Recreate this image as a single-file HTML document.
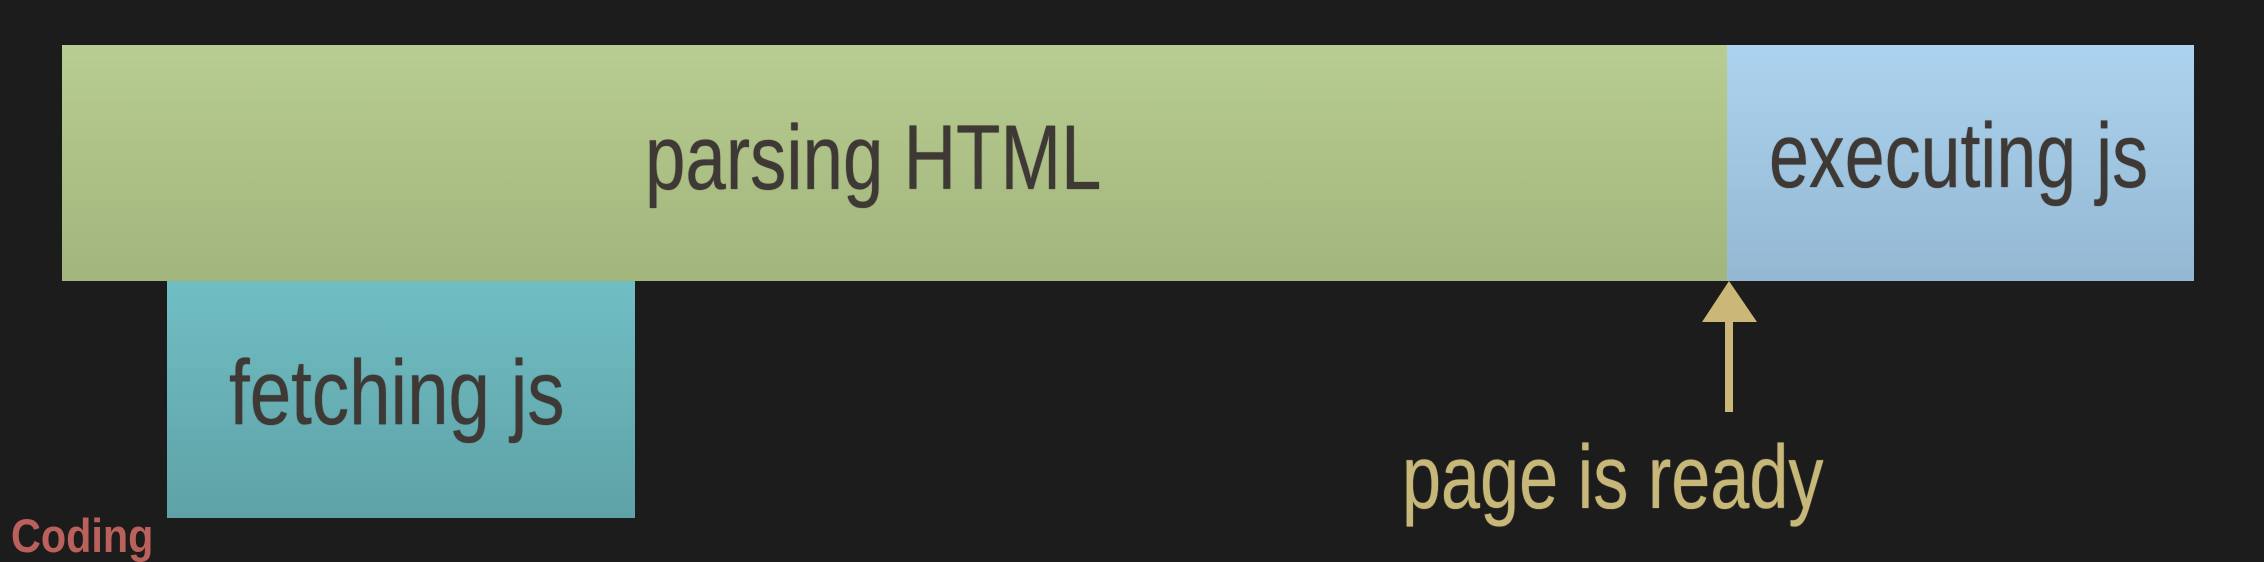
<!DOCTYPE html>
<html><head><meta charset="utf-8"><style>
html,body{margin:0;padding:0;}
body{width:2264px;height:546px;background:#1c1c1c;position:relative;overflow:hidden;font-family:"Liberation Sans",sans-serif;}
.b{position:absolute;}
.t{position:absolute;white-space:nowrap;line-height:1;transform-origin:0 0;color:#3e3935;text-shadow:0 0 1px currentColor;}
</style></head><body>
<div class="b" style="left:62px;top:45px;width:1665px;height:236px;background:linear-gradient(#b8cd92,#a2b57c);"></div>
<div class="b" style="left:1727px;top:45px;width:467px;height:236px;background:linear-gradient(#acd3ef,#94b8d2);"></div>
<div class="b" style="left:167px;top:281px;width:468px;height:237px;background:linear-gradient(#70bec4,#5ea2a7);"></div>
<div class="t" style="left:645px;top:112px;font-size:92px;transform:scaleX(0.79);">parsing HTML</div>
<div class="t" style="left:1769px;top:110px;font-size:92px;transform:scaleX(0.78);">executing js</div>
<div class="t" style="left:229px;top:347px;font-size:92px;transform:scaleX(0.81);">fetching js</div>
<svg class="b" style="left:1690px;top:275px" width="80" height="145">
<polygon points="39,6 67,47 12,47" fill="#cbb878"/>
<rect x="35" y="45" width="8" height="92" fill="#cbb878"/>
</svg>
<div class="t" style="left:1402px;top:433px;font-size:90px;color:#c7b779;transform:scaleX(0.78);">page is ready</div>
<div class="t" style="left:11px;top:512px;font-size:47px;font-weight:bold;color:#bb615c;transform:scaleX(0.88);text-shadow:none;">Coding</div>
</body></html>
